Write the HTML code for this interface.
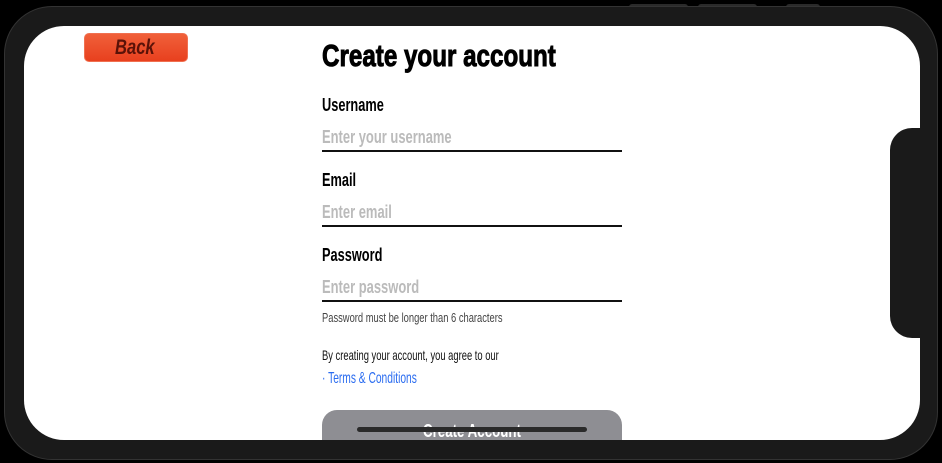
<!DOCTYPE html>
<html><head><style>
*{margin:0;padding:0;box-sizing:border-box}
body{width:942px;height:463px;background:#000;position:relative;overflow:hidden;font-family:"Liberation Sans Narrow","Liberation Sans",sans-serif}
.frame{position:absolute;left:4px;top:6px;width:934px;height:454px;background:#1a1a1a;border-radius:48px;border:1px solid #333}
.screen{position:absolute;left:24px;top:26px;width:896px;height:414px;background:#fff;border-radius:40px;overflow:hidden}
.notch{position:absolute;left:890px;top:128px;width:40px;height:210px;background:#1a1a1a;border-radius:22px 0 0 22px}
.btn{position:absolute;top:4px;height:6px;background:#2a2a2a;border-radius:3px 3px 0 0}
.t{position:absolute;left:322px;white-space:nowrap;transform-origin:left center;font-weight:bold}
.line{position:absolute;left:322px;width:300px;height:2px;background:#111}
</style></head><body>
<div class="btn" style="left:629px;width:59px"></div>
<div class="btn" style="left:698px;width:59px"></div>
<div class="btn" style="left:786px;width:34px"></div>
<div class="frame"></div>
<div class="screen"></div>
<div class="notch"></div>
<div style="position:absolute;left:84px;top:33px;width:104px;height:29px;background:linear-gradient(#f0603a,#e8401e);border:1px solid #f07050;border-radius:5px;"></div>
<div class="t" style="left:115px;top:36px;font-size:21px;color:#5a1208;font-style:italic;transform:scaleX(.79)">Back</div>
<div class="t" style="top:38px;font-size:31px;color:#000;transform:scaleX(.78);font-weight:900;-webkit-text-stroke:1px #000">Create your account</div>
<div class="t" style="top:95px;font-size:18px;transform:scaleX(.71)">Username</div>
<div class="t" style="top:127px;font-size:18px;color:#bbb;transform:scaleX(.72)">Enter your username</div>
<div class="line" style="top:150px"></div>
<div class="t" style="top:170px;font-size:18px;transform:scaleX(.71)">Email</div>
<div class="t" style="top:202px;font-size:18px;color:#bbb;transform:scaleX(.72)">Enter email</div>
<div class="line" style="top:225px"></div>
<div class="t" style="top:245px;font-size:18px;transform:scaleX(.71)">Password</div>
<div class="t" style="top:277px;font-size:18px;color:#bbb;transform:scaleX(.72)">Enter password</div>
<div class="line" style="top:300px"></div>
<div class="t" style="top:310px;font-size:13px;color:#444;font-weight:normal;transform:scaleX(.72)">Password must be longer than 6 characters</div>
<div class="t" style="top:347px;font-size:14px;color:#111;font-weight:normal;transform:scaleX(.67)">By creating your account, you agree to our</div>
<div class="t" style="top:370px;font-size:16px;color:#2a6cf0;font-weight:normal;transform:scaleX(.64)">· Terms &amp; Conditions</div>
<div style="position:absolute;left:322px;top:410px;width:300px;height:30px;background:#8e8e93;border-radius:15px 15px 0 0"></div>
<div class="t" style="left:423px;top:421px;font-size:18px;color:#fff;transform:scaleX(.74)">Create Account</div>
<div style="position:absolute;left:357px;top:427px;width:230px;height:5px;background:#2a2a2a;border-radius:3px"></div>
</body></html>
